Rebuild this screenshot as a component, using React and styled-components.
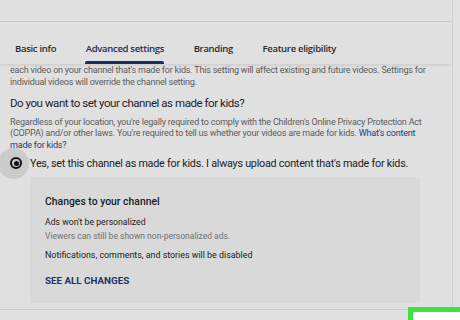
import React from 'react';
import styled, { createGlobalStyle } from 'styled-components';

const GlobalStyle = createGlobalStyle`
  html, body {
    margin: 0;
    padding: 0;
    background: #e0e0e0;
    overflow: hidden;
  }
  body {
    font-family: Roboto, "Liberation Sans", sans-serif;
  }
`;

const Page = styled.div`
  position: relative;
  display: flex;
  width: 460px;
  height: 320px;
  overflow: hidden;
  background: #e0e0e0;
`;

const Main = styled.div`
  width: 452px;
  height: 320px;
  display: flex;
  flex-direction: column;
  border-right: 1px solid #d2d2d2;
`;

const Strip = styled.div`
  flex: 1;
  background: #e2e2e2;
`;

const TopBar = styled.div`
  flex-shrink: 0;
  height: 21px;
  border-bottom: 1px solid #c9c9c9;
`;

const TabBar = styled.div`
  flex-shrink: 0;
  height: 42px;
  display: flex;
  align-items: stretch;
  gap: 29.5px;
  padding-left: 15px;
  box-shadow: 0 2px 2px rgba(0, 0, 0, 0.07);
  position: relative;
  z-index: 1;
`;

const Tab = styled.div`
  position: relative;
  display: flex;
  align-items: center;
  padding-top: 10px;
  font-family: "Open Sans", sans-serif;
  font-size: 9.5px;
  letter-spacing: -0.3px;
  font-weight: 600;
  color: ${p => (p.$active ? '#1b2d5e' : '#2a2a2a')};
  &::after {
    content: '';
    display: ${p => (p.$active ? 'block' : 'none')};
    position: absolute;
    left: -1px;
    right: 0;
    bottom: 0;
    height: 3px;
    border-radius: 2px 2px 0 0;
    background: #1b2d5e;
  }
`;

const Content = styled.div`
  flex: 1;
  padding-left: 10px;
  display: flex;
  flex-direction: column;
`;

const Small = styled.p`
  margin: ${p => p.$mt || 0}px 0 0;
  font-size: 9px;
  letter-spacing: -0.2px;
  line-height: ${p => p.$lh || 12}px;
  color: #5c5c5c;
  white-space: nowrap;
`;

const Heading = styled.h2`
  margin: 7.5px 0 0;
  font-size: 11.5px;
  letter-spacing: -0.45px;
  line-height: 15px;
  font-weight: 400;
  color: #1e1e1e;
`;

const Link = styled.span`
  color: #1f3a78;
`;

const RadioRow = styled.div`
  display: flex;
  align-items: center;
  margin: 2px 0 0 -10px;
  height: 20px;
`;

const RadioHalo = styled.div`
  flex-shrink: 0;
  width: 31px;
  height: 31px;
  margin-left: -2px;
  border-radius: 50%;
  background: #cbcbcb;
  display: flex;
  align-items: center;
  justify-content: center;
  padding-left: 5px;
  box-sizing: border-box;
`;

const Radio = styled.div`
  width: 12px;
  height: 12px;
  border: 2px solid #111;
  border-radius: 50%;
  box-sizing: border-box;
  display: flex;
  align-items: center;
  justify-content: center;
  &::after {
    content: '';
    width: 5px;
    height: 5px;
    border-radius: 50%;
    background: #111;
  }
`;

const RadioLabel = styled.span`
  font-size: 10.8px;
  letter-spacing: -0.25px;
  color: #1c1c1c;
  margin-left: 1px;
  white-space: nowrap;
`;

const ChangesBox = styled.div`
  margin: 4px 0 0 20px;
  width: 390px;
  height: 126px;
  flex-shrink: 0;
  box-sizing: border-box;
  background: #d9d9d9;
  padding: 17.5px 15px 0;
  display: flex;
  flex-direction: column;
`;

const BoxTitle = styled.div`
  font-size: 10.4px;
  line-height: 13px;
  font-weight: 500;
  color: #1c1c1c;
`;

const Item = styled.div`
  font-size: ${p => p.$size || 8.7}px;
  line-height: 12px;
  color: ${p => (p.$muted ? '#727272' : '#1c1c1c')};
  margin-top: ${p => p.$gap || 0}px;
`;

const SeeAll = styled.div`
  margin-top: 14px;
  font-size: 9.8px;
  line-height: 12px;
  font-weight: 700;
  color: #1f3466;
`;

const BottomLine = styled.div`
  flex-shrink: 0;
  margin-top: auto;
  margin-left: -10px;
  height: 10px;
  border-top: 1px solid #cacaca;
`;

const Highlight = styled.div`
  position: absolute;
  left: 408px;
  top: 307px;
  width: 60px;
  height: 30px;
  border: 5px solid #3de23d;
  background: #ffffff;
`;

export default function App() {
  return (
    <>
      <GlobalStyle />
      <Page>
        <Main>
          <TopBar />
          <TabBar>
            <Tab>Basic info</Tab>
            <Tab $active>Advanced settings</Tab>
            <Tab>Branding</Tab>
            <Tab>Feature eligibility</Tab>
          </TabBar>
          <Content>
            <Small>
              each video on your channel that's made for kids. This setting will affect existing and future videos. Settings for
              <br />
              individual videos will override the channel setting.
            </Small>
            <Heading>Do you want to set your channel as made for kids?</Heading>
            <Small $mt={6} $lh={11.5}>
              Regardless of your location, you're legally required to comply with the Children's Online Privacy Protection Act
              <br />
              (COPPA) and/or other laws. You're required to tell us whether your videos are made for kids. <Link>What's content</Link>
              <br />
              <Link>made for kids?</Link>
            </Small>
            <RadioRow>
              <RadioHalo>
                <Radio />
              </RadioHalo>
              <RadioLabel>Yes, set this channel as made for kids. I always upload content that's made for kids.</RadioLabel>
            </RadioRow>
            <ChangesBox>
              <BoxTitle>Changes to your channel</BoxTitle>
              <Item $gap={8.5}>Ads won't be personalized</Item>
              <Item $muted $gap={2} $size={8.5}>Viewers can still be shown non-personalized ads.</Item>
              <Item $gap={7} $size={8.9}>Notifications, comments, and stories will be disabled</Item>
              <SeeAll>SEE ALL CHANGES</SeeAll>
            </ChangesBox>
            <BottomLine />
          </Content>
        </Main>
        <Strip />
        <Highlight />
      </Page>
    </>
  );
}
